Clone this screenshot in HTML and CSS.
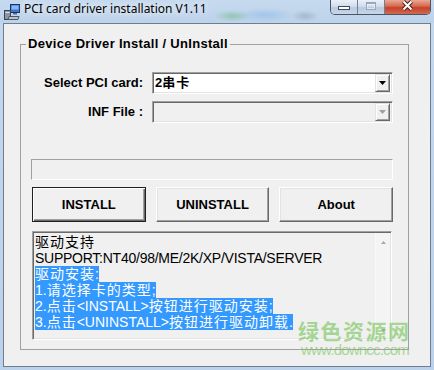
FILE: index.html
```html
<!DOCTYPE html>
<html>
<head>
<meta charset="utf-8">
<link rel="stylesheet" href="styles.css">
</head>
<body>
<div class="window">
  <div class="titlebar">
    <svg class="app-icon" width="16" height="16" viewBox="0 0 16 16">
      <rect x="6.5" y="0.5" width="9" height="8" fill="#3b78d6" stroke="#1b2f6b"/>
      <rect x="7.5" y="1.5" width="7" height="4" fill="#86b8f2"/>
      <rect x="9" y="9" width="4" height="1.5" fill="#5a6a80"/>
      <rect x="0.5" y="6.5" width="6" height="9" fill="#8c96a3" stroke="#3c4452"/>
      <rect x="1.5" y="8" width="4" height="1" fill="#dfe4ea"/>
      <path d="M5 12.5h10l-1 3H4z" fill="#b9c2cc" stroke="#4c5563"/>
    </svg>
    <span class="title">PCI card driver installation V1.11</span>
    <div class="caption">
      <div class="cap-btn cap-min"><span class="min-glyph"></span></div>
      <div class="cap-btn cap-max"><span class="max-glyph"></span></div>
      <div class="cap-btn cap-close">
        <svg width="13" height="11" viewBox="0 0 13 11">
          <path d="M2.5 1.5L10.5 9.5M10.5 1.5L2.5 9.5" stroke="#4a2420" stroke-width="4"/>
          <path d="M2.5 1.5L10.5 9.5M10.5 1.5L2.5 9.5" stroke="#fff" stroke-width="2"/>
        </svg>
      </div>
    </div>
  </div>
  <div class="client">
    <fieldset class="group">
      <legend>Device Driver Install / UnInstall</legend>
      <div class="group-body">
        <div class="form">
          <label class="lbl">Select PCI card:</label>
          <div class="combo">
            <span class="combo-text">2<span class="c">串卡</span></span>
            <span class="drop"><svg width="7" height="4" viewBox="0 0 7 4"><path d="M0 0h7L3.5 4z" fill="#000"/></svg></span>
          </div>
          <label class="lbl">INF File :</label>
          <div class="combo disabled">
            <span class="combo-text"></span>
            <span class="drop"><svg width="7" height="4" viewBox="0 0 7 4"><path d="M0 0h7L3.5 4z" fill="#a0a0a0"/></svg></span>
          </div>
        </div>
        <div class="progress"></div>
        <div class="buttons">
          <div class="btn default">INSTALL</div>
          <div class="btn">UNINSTALL</div>
          <div class="btn">About</div>
        </div>
        <div class="memo">
          <div class="memo-text">
            <div class="line"><span class="c">驱动支持</span></div>
            <div class="line sup">SUPPORT:NT40/98/ME/2K/XP/VISTA/SERVER</div>
            <div class="line"><span class="sel"><span class="c">驱动安装</span>:</span></div>
            <div class="line"><span class="sel">1.<span class="c">请选择卡的类型</span>;</span></div>
            <div class="line"><span class="sel">2.<span class="c">点击</span>&lt;INSTALL&gt;<span class="c">按钮进行驱动安装</span>;</span></div>
            <div class="line"><span class="sel">3.<span class="c">点击</span>&lt;UNINSTALL&gt;<span class="c">按钮进行驱动卸载</span>.</span></div>
          </div>
          <div class="vscroll">
            <svg width="5" height="3" viewBox="0 0 5 3"><path d="M2.5 0L5 3H0z" fill="#a8a8a8"/></svg>
            <svg width="5" height="3" viewBox="0 0 5 3"><path d="M0 0h5L2.5 3z" fill="#a8a8a8"/></svg>
          </div>
        </div>
      </div>
    </fieldset>
  </div>
  <div class="watermark">
    <div class="wm-cn">绿色资源网</div>
    <div class="wm-url">www.downcc.com</div>
  </div>
</div>
</body>
</html>
```

FILE: styles.css
```css
* { box-sizing: border-box; }
html, body { margin: 0; padding: 0; }
body {
  width: 434px;
  height: 370px;
  overflow: hidden;
  font-family: "Liberation Sans", Arial, "Noto Sans CJK SC", sans-serif;
}
.window {
  position: relative;
  width: 434px;
  height: 370px;
  display: flex;
  flex-direction: column;
  background: linear-gradient(#c4d8ee, #bcd2ea);
}
.titlebar {
  height: 23px;
  flex: none;
  display: flex;
  align-items: flex-start;
  background:
    radial-gradient(ellipse 18px 6px at 232px 16px, rgba(110,185,130,0.55), rgba(110,185,130,0)),
    radial-gradient(ellipse 30px 7px at 265px 15px, rgba(150,190,235,0.7), rgba(150,190,235,0)),
    radial-gradient(ellipse 14px 6px at 305px 16px, rgba(120,130,150,0.35), rgba(120,130,150,0)),
    linear-gradient(#c6daef, #bdd3ea);
}
.app-icon { flex: none; margin: 4px 0 0 4px; }
.title {
  margin-left: 4px;
  font: 12px/18px "Noto Sans", "Liberation Sans", sans-serif;
  color: #000;
  white-space: nowrap;
  text-shadow: 0 0 6px rgba(255,255,255,0.9), 0 0 10px rgba(255,255,255,0.7);
}
.caption {
  margin-left: auto;
  margin-right: 3px;
  width: 101px;
  height: 15px;
  display: flex;
  border: 1px solid #48566a;
  border-top: none;
  border-radius: 0 0 5px 5px;
  overflow: hidden;
}
.cap-btn {
  height: 14px;
  display: flex;
  justify-content: center;
}
.cap-min, .cap-max {
  width: 27px;
  border-right: 1px solid #6f7f95;
  background: linear-gradient(#e9f0f8, #d2deec 45%, #b9cadf 55%, #c8d7e8);
}
.cap-close {
  flex: 1;
  align-items: flex-start;
  background: linear-gradient(#e9a997, #d7674c 45%, #c4412a 55%, #d36a4f);
}
.min-glyph {
  margin-top: 6px;
  width: 12px;
  height: 4px;
  background: #fff;
  border: 1px solid #3d4a5c;
}
.max-glyph {
  margin-top: 2px;
  width: 10px;
  height: 8px;
  border: 1px solid #97a8be;
  border-top-width: 2px;
  box-shadow: inset 0 0 0 1px rgba(255,255,255,0.5);
}
.client {
  flex: 1;
  margin: 0 3px 3px;
  border: 1px solid #6d7e92;
  background: #f0f0f0;
}
.group {
  margin: 12px 0 0 16px;
  width: 389px;
  height: 314px;
  padding: 0;
  border: 1px solid #a0a0a0;
  min-width: 0;
}
.group legend {
  margin-left: 5px;
  padding: 0 2px;
  font: bold 13px/16px "Liberation Sans", Arial, sans-serif;
  letter-spacing: 0.3px;
  color: #000;
}
.group-body { padding: 0 15px 0 10px; }
.form {
  margin-top: 20px;
  display: grid;
  grid-template-columns: 112px 241px;
  grid-auto-rows: 22px;
  column-gap: 9px;
  row-gap: 7px;
}
.lbl {
  text-align: right;
  font: bold 13px/22px "Liberation Sans", Arial, sans-serif;
  color: #000;
  white-space: nowrap;
}
.combo {
  display: flex;
  align-items: center;
  padding: 1px;
  background: #fff;
  border: 1px solid;
  border-color: #a0a0a0 #fff #fff #a0a0a0;
  box-shadow: inset 1px 1px #696969, inset -1px -1px #e3e3e3;
}
.combo.disabled { background: #f0f0f0; }
.combo-text {
  flex: 1;
  padding-left: 1px;
  font: bold 13px/18px "Liberation Sans", Arial, "Noto Sans CJK SC", sans-serif;
  color: #000;
  white-space: nowrap;
}
.drop {
  flex: none;
  width: 15px;
  height: 18px;
  margin-right: 1px;
  display: flex;
  align-items: center;
  justify-content: center;
  background: #f0f0f0;
  border: 1px solid;
  border-color: #e3e3e3 #696969 #696969 #e3e3e3;
  box-shadow: inset 1px 1px #fff, inset -1px -1px #a0a0a0;
}
.progress {
  margin-top: 36px;
  height: 21px;
  border: 1px solid;
  border-color: #a0a0a0 #fff #fff #a0a0a0;
}
.buttons {
  margin-top: 7px;
  height: 35px;
  padding-left: 1px;
  display: grid;
  grid-template-columns: repeat(3, 1fr);
  column-gap: 10px;
}
.btn {
  display: flex;
  align-items: center;
  justify-content: center;
  font: bold 13px/16px "Liberation Sans", Arial, sans-serif;
  color: #000;
  background: #f0f0f0;
  border: 1px solid;
  border-color: #fff #696969 #696969 #fff;
  box-shadow: inset -1px -1px #a0a0a0, inset 1px 1px #e3e3e3;
}
.btn.default {
  border: 1px solid #202020;
  box-shadow: inset 1px 1px #fff, inset -1px -1px #696969, inset -2px -2px #a0a0a0;
}
.memo {
  margin: 9px 1px 0;
  height: 109px;
  padding: 1px;
  display: flex;
  border: 1px solid;
  border-color: #a0a0a0 #fff #fff #a0a0a0;
  box-shadow: inset 1px 1px #696969, inset -1px -1px #e3e3e3;
}
.memo-text {
  flex: 1;
  padding: 1px 0 0 1px;
  overflow: hidden;
  white-space: nowrap;
  font: 14px/16px "Liberation Sans", Arial, "Noto Sans CJK SC", sans-serif;
  color: #000;
}
.line { height: 16px; line-height: 16px; }
.sup { letter-spacing: -0.25px; }
.c { letter-spacing: 1px; }
.sel {
  display: inline-block;
  vertical-align: top;
  height: 16px;
  line-height: 16px;
  background: #3399ff;
  color: #fff;
}
.vscroll {
  flex: none;
  width: 15px;
  display: flex;
  flex-direction: column;
  justify-content: space-between;
  align-items: center;
  padding: 8px 0 6px;
  background: #f4f4f4;
  border-left: 1px solid #fafafa;
}
.vscroll svg { display: block; }
.watermark {
  position: absolute;
  left: 298px;
  top: 318px;
  pointer-events: none;
}
.wm-cn {
  font: bold 21px/24px "Noto Sans CJK SC", sans-serif;
  letter-spacing: 1.5px;
  color: rgba(115, 195, 85, 0.62);
  white-space: nowrap;
}
.wm-url {
  margin-left: 3px;
  font: 15px/16px "Liberation Sans", Arial, sans-serif;
  letter-spacing: -0.8px;
  color: rgba(115, 195, 85, 0.6);
  white-space: nowrap;
}
```
